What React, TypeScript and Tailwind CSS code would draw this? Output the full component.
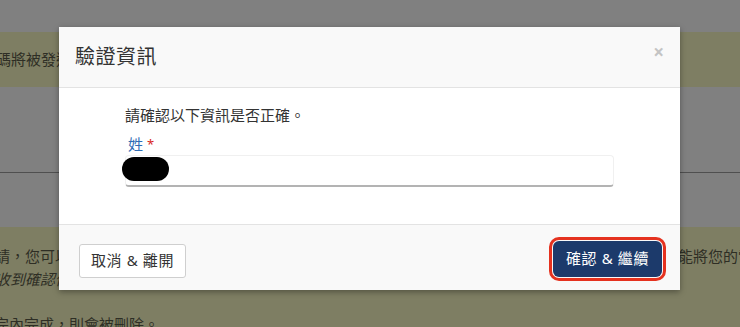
import React from "react";

const font = { fontFamily: '"Noto Sans", "Noto Sans CJK TC", sans-serif' };

export default function App() {
  return (
    <div
      className="relative w-[740px] h-[327px] overflow-hidden bg-[#808080] text-[#2e2e25]"
      style={font}
    >
      {/* background page (under overlay) */}
      <div className="flex flex-col">
        <div className="h-[32px]" />
        <div className="h-[55px] bg-[#7e7e63] flex items-center pl-[0px] -ml-[4px] text-[15px] whitespace-nowrap">
          碼將被發送至您的電子郵件信箱
        </div>
        <div className="h-[85px]" />
        <div className="h-px bg-[#4f4f4f]" />
        <div className="h-[54px]" />
        <div className="h-[100px] bg-[#7e7e63] text-[15px] whitespace-nowrap">
          <div className="h-[17px]" />
          <div className="flex h-[24px] items-center justify-between">
            <span className="-ml-[5px]">請，您可以在此頁面確認</span>
            <span className="w-[62px] overflow-hidden">能將您的電</span>
          </div>
          <div className="h-[22px] flex items-center -ml-[5px] italic">收到確認信</div>
          <div className="h-[22px]" />
          <div className="h-[24px] flex items-center -ml-[6px]">完內完成，則會被刪除。</div>
        </div>
      </div>

      {/* modal */}
      <div className="absolute left-[59px] top-[27px] w-[621px] h-[263px] bg-white flex flex-col shadow-[0_2px_6px_rgba(0,0,0,0.35)]">
        <div className="h-[61px] bg-[#f9f9f9] border-b border-[#e3e3e3] flex items-center justify-between pl-[16px] pr-[16px]">
          <span className="text-[20px] text-[#333] tracking-[0.5px]">驗證資訊</span>
          <span className="text-[19px] font-bold text-[#c4c4c4] leading-none -mt-[9px]">×</span>
        </div>
        <div className="h-[136px] pl-[66px] pt-[16px] flex flex-col">
          <div className="text-[15px] leading-[22px] text-[#333]">請確認以下資訊是否正確。</div>
          <div className="mt-[9px] flex items-center h-[18px] pl-[3px] text-[15px] leading-[18px]">
            <span className="text-[#2f6db5]">姓</span>
            <span className="ml-[4px] text-[#d9261c] text-[13px]">*</span>
          </div>
          <div className="relative mt-[2px] w-[489px] h-[32px] rounded-[4px] border border-[#f0f0f0] border-b-[2px] border-b-[#b3b3b3] bg-white">
            <div className="absolute left-[-4px] top-[1px] w-[47px] h-[24px] rounded-full bg-black" />
          </div>
        </div>
        <div className="flex-1 bg-[#f9f9f9] border-t border-[#e3e3e3] flex items-center justify-between pl-[20px] pr-[18px]">
          <button className="w-[107px] h-[34px] mt-[6px] bg-white border border-[#cfcfcf] rounded-[3px] text-[15px] text-[#333] tracking-[0.6px]">
            取消 &amp; 離開
          </button>
          <button className="w-[109px] h-[36px] mt-[2px] rounded-[6px] bg-[#1c3a6b] text-[15px] text-white tracking-[0.6px] outline-[3px] outline-solid outline-[#e5321f] outline-offset-[1px]">
            確認 &amp; 繼續
          </button>
        </div>
      </div>
    </div>
  );
}
